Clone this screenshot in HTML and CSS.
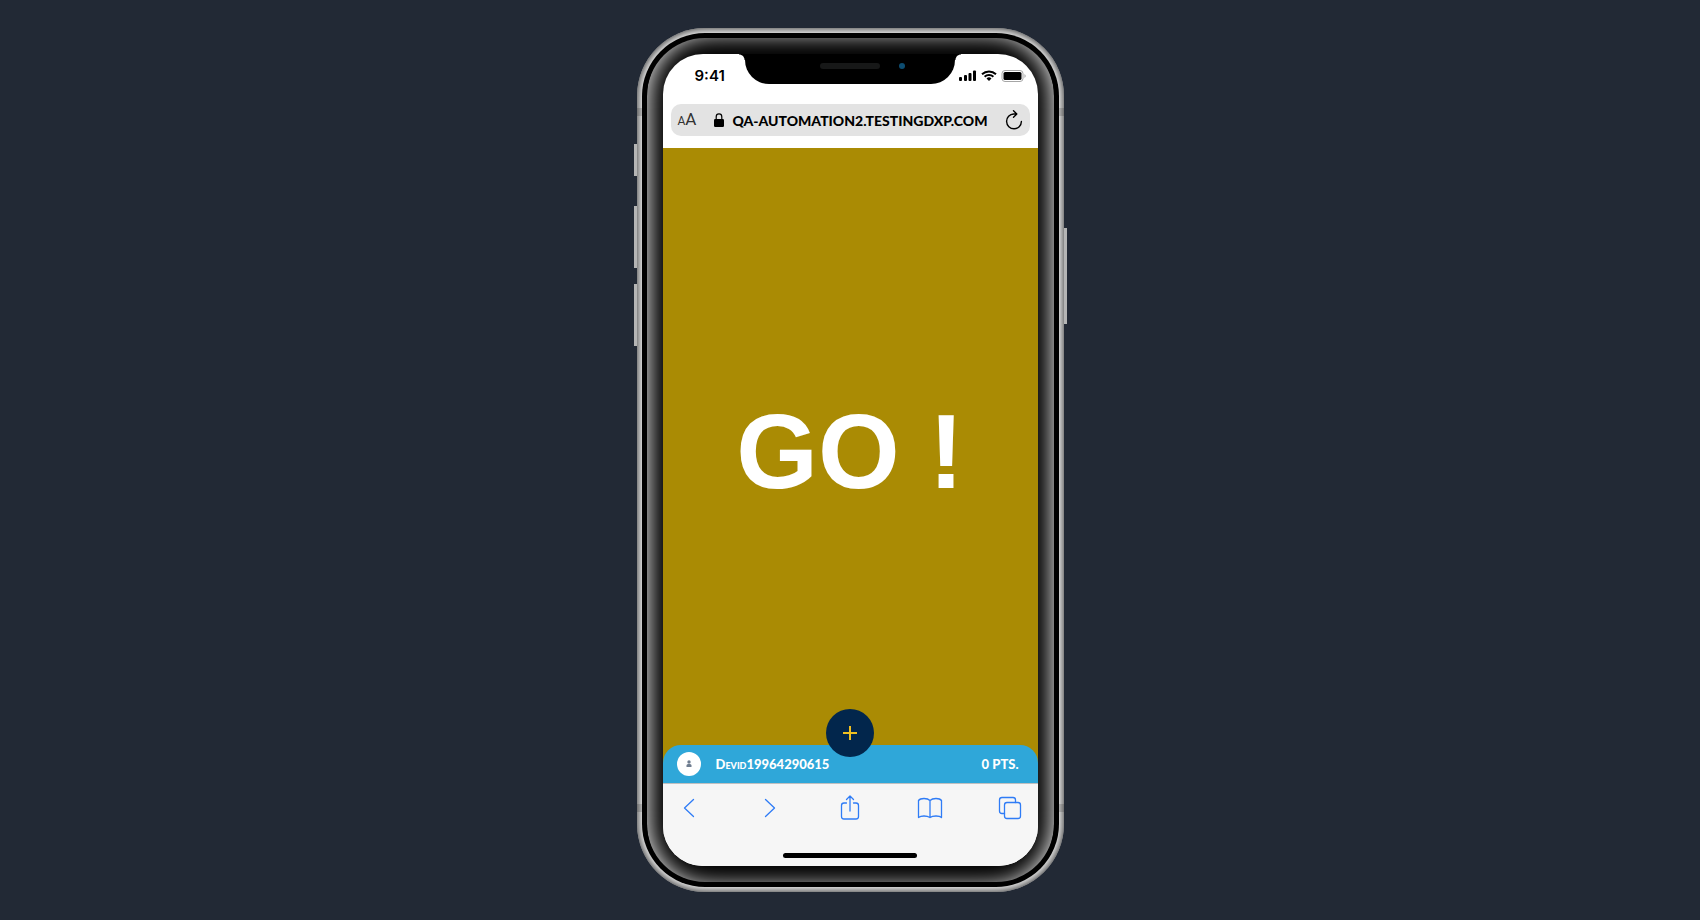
FILE: index.html
```html
<!DOCTYPE html>
<html lang="en">
<head>
<meta charset="utf-8">
<title>Mobile preview</title>
<link rel="stylesheet" href="styles.css">
</head>
<body>
<main class="stage">
  <div class="phone">
    <span class="band band-top"></span>
    <span class="band band-bottom"></span>
    <span class="key key-mute"></span>
    <span class="key key-up"></span>
    <span class="key key-down"></span>
    <span class="key key-power"></span>
    <span class="bezel"></span>
    <div class="screen">
      <div class="notch">
        <span class="speaker"></span>
        <span class="camera"></span>
      </div>
      <header class="status">
        <span class="time">9:41</span>
        <svg class="signals" width="66" height="12" viewBox="0 0 66 12" aria-hidden="true">
          <rect x="0" y="7" width="3" height="4" rx="1"/>
          <rect x="5" y="5" width="3" height="6" rx="1"/>
          <rect x="9.500" y="3" width="3" height="8" rx="1"/>
          <rect x="14" y="0.500" width="3" height="10.500" rx="1"/>
          <path d="M23 4.200a10.200 10.200 0 0 1 14 0M25.600 6.800a6.400 6.400 0 0 1 8.800 0" fill="none" stroke="#000" stroke-width="2"/>
          <path d="M30 11l-2.500-2.500a3.600 3.600 0 0 1 5 0z"/>
          <rect x="43" y="0.500" width="21" height="11" rx="3" fill="none" stroke="#a6a6a6"/>
          <rect x="44.500" y="2" width="18" height="8" rx="1.600"/>
          <path d="M65.500 4v4q1.200-.8 1.200-2t-1.200-2z" fill="#a6a6a6"/>
        </svg>
      </header>
      <div class="address">
        <button class="plain text-size" aria-label="Text size"><small>A</small>A</button>
        <div class="site">
          <svg width="10" height="14" viewBox="0 0 10 14" aria-hidden="true"><path d="M2.200 6.500V3.700a2.800 2.800 0 0 1 5.600 0v2.800" fill="none" stroke="#000" stroke-width="1.200"/><rect x="0" y="6" width="10" height="8" rx="1.300"/></svg>
          <span class="url">qa-automation2.testingdxp.com</span>
        </div>
        <button class="plain" aria-label="Reload">
          <svg width="18" height="20" viewBox="0 0 18 20" fill="none" stroke="#000" stroke-width="1.400" stroke-linecap="round" stroke-linejoin="round"><path d="M11.500 4H8.700A7.400 7.400 0 1 0 16.400 11.500M8.500 .8l3.300 3.200L8.500 7.300"/></svg>
        </button>
      </div>
      <section class="game">
        <h1 class="go">GO !</h1>
      </section>
      <div class="player">
        <span class="avatar"><svg width="6" height="8" viewBox="0 0 6 8" fill="#6f7d90" aria-hidden="true"><circle cx="3" cy="2" r="1.700"/><path d="M.5 7V5.500Q.5 4 2 4h2q1.500 0 1.500 1.500V7z"/></svg></span>
        <span class="name">Devid19964290615</span>
        <span class="points">0 pts.</span>
        <button class="add" aria-label="Add"><svg width="14" height="14" viewBox="0 0 14 14" stroke="#f0c020" stroke-width="2"><path d="M7 0v14M0 7h14"/></svg></button>
      </div>
      <nav class="tools">
        <button class="plain" aria-label="Back"><svg width="28" height="28" viewBox="0 0 28 28"><path d="M16.500 5.500L7.500 14l9 8.500"/></svg></button>
        <button class="plain" aria-label="Forward"><svg width="28" height="28" viewBox="0 0 28 28"><path d="M9.500 5.500l9 8.500-9 8.500"/></svg></button>
        <button class="plain" aria-label="Share"><svg width="28" height="28" viewBox="0 0 28 28"><path d="M10.500 9H8Q5.500 9 5.500 11.500v11Q5.500 25 8 25h12q2.500 0 2.500-2.500v-11Q22.500 9 20 9h-2.500M14 17V2M10.500 5.500L14 2l3.500 3.500"/></svg></button>
        <button class="plain" aria-label="Bookmarks"><svg width="28" height="28" viewBox="0 0 28 28"><path d="M14 6.500Q12 4.500 8 4.500T2.500 6.500V23.500Q4.500 22 8 22t6 1.500Q16 22 20 22t5.500 1.500V6.500Q24 4.500 20 4.500T14 6.500V23.500"/></svg></button>
        <button class="plain" aria-label="Tabs"><svg width="28" height="28" viewBox="0 0 28 28"><rect x="8.500" y="8.500" width="16" height="16" rx="2.500"/><path d="M8.500 19.500H6Q3.500 19.500 3.500 17V6Q3.500 3.500 6 3.500h11Q19.500 3.500 19.500 6v2.500"/></svg></button>
      </nav>
      <div class="home"><span class="home-bar"></span></div>
    </div>
  </div>
</main>
</body>
</html>
```
FILE: styles.css
```css
* { box-sizing: border-box; }
body {
  margin: 0;
  background: #222935;
  font-family: "Liberation Sans", Arial, sans-serif;
}
.stage {
  min-height: 100vh;
  display: flex;
  align-items: center;
  justify-content: center;
}
.phone {
  position: relative;
  padding: 26px;
  border-radius: 68px;
  background: #fdfdfd;
  box-shadow: inset 0 0 11px 0 #000;
}
.phone::before {
  content: "";
  position: absolute;
  inset: 5px;
  border-radius: 63px;
  background: #000;
}
.bezel {
  position: absolute;
  inset: 10px;
  border-radius: 58px;
  overflow: hidden;
}
.bezel::before {
  content: "";
  position: absolute;
  inset: -6px 0;
  border-radius: 64px;
  box-shadow: inset 0 0 25px 1px #fff;
}
.band {
  position: absolute;
  left: 0;
  width: 100%;
  height: 8px;
  background: rgba(0, 0, 0, 0.15);
}
.band-top { top: 80px; }
.band-bottom { bottom: 80px; }
.key {
  position: absolute;
  left: -3px;
  width: 3px;
  background: #b5b5b5;
}
.key-mute { top: 116px; height: 32px; }
.key-up { top: 178px; height: 62px; }
.key-down { top: 256px; height: 62px; }
.key-power { left: 100%; top: 200px; height: 96px; }
.screen {
  position: relative;
  display: flex;
  flex-direction: column;
  width: 375px;
  min-height: 812px;
  border-radius: 40px;
  overflow: hidden;
  background: #fff;
}
.notch {
  position: absolute;
  top: 0;
  left: 82px;
  right: 83px;
  height: 30px;
  border-radius: 0 0 24px 24px;
  background: #000;
}
.notch::before,
.notch::after {
  content: "";
  position: absolute;
  top: 0;
  width: 6px;
  height: 6px;
}
.notch::before {
  right: 100%;
  background: radial-gradient(circle at 0 100%, transparent 5px, #000 6px);
}
.notch::after {
  left: 100%;
  background: radial-gradient(circle at 100% 100%, transparent 5px, #000 6px);
}
.speaker {
  position: absolute;
  top: 9px;
  left: 75px;
  width: 60px;
  height: 6px;
  border-radius: 3px;
  background: #171818;
}
.camera {
  position: absolute;
  top: 9px;
  left: 154px;
  width: 6px;
  height: 6px;
  border-radius: 50%;
  background: #0d4d71;
}
.status {
  display: flex;
  align-items: center;
  justify-content: space-between;
  height: 44px;
  padding: 0 13px 0 32px;
}
.time {
  font: 600 15px/20px Inter, sans-serif;
}
.signals { overflow: visible; }
.plain {
  display: flex;
  align-items: center;
  justify-content: center;
  padding: 0;
  border: 0;
  background: none;
  color: inherit;
  font: inherit;
}
.address {
  display: flex;
  align-items: center;
  justify-content: space-between;
  height: 32px;
  margin: 6px 8px 12px;
  padding: 0 6px 0 7px;
  border-radius: 10px;
  background: #e3e3e3;
}
.text-size {
  align-items: baseline;
  color: #333;
  font: 400 17px/20px Roboto, sans-serif;
}
.text-size small { font-size: 12px; }
.site {
  display: flex;
  align-items: center;
  gap: 8px;
}
.url {
  padding-top: 2px;
  font: 900 14px/20px Lato, sans-serif;
  text-transform: uppercase;
}
.game {
  flex: 1;
  display: flex;
  align-items: center;
  justify-content: center;
  margin-bottom: -20px;
  padding-bottom: 10px;
  background: #aa8b04;
}
.go {
  margin: 0;
  color: #fff;
  font-size: 105px;
  line-height: 120px;
}
.player {
  position: relative;
  display: flex;
  align-items: center;
  height: 38px;
  padding: 0 19px 0 14px;
  border-radius: 18px 18px 0 0;
  background: #2fa7d9;
  color: #fff;
  font: 900 13px/20px Lato, sans-serif;
}
.avatar {
  display: flex;
  align-items: center;
  justify-content: center;
  width: 24px;
  height: 24px;
  margin-right: 15px;
  border-radius: 50%;
  background: #fff;
}
.name { font-variant: small-caps; }
.points {
  margin-left: auto;
  text-transform: uppercase;
}
.add {
  position: absolute;
  left: calc(50% - 24px);
  top: -36px;
  display: flex;
  align-items: center;
  justify-content: center;
  width: 48px;
  height: 48px;
  padding: 0;
  border: 0;
  border-radius: 50%;
  background: #02264c;
}
.tools {
  display: flex;
  justify-content: space-between;
  padding: 10px 14px 15px;
  border-top: 1px solid #c0c0c0;
  background: #f6f6f6;
}
.tools svg {
  fill: none;
  stroke: #2f7cf6;
  stroke-width: 1.3;
  stroke-linecap: round;
  stroke-linejoin: round;
}
.home {
  display: flex;
  justify-content: center;
  height: 29px;
  padding-top: 16px;
  background: #f6f6f6;
}
.home-bar {
  width: 134px;
  height: 5px;
  border-radius: 3px;
  background: #000;
}
```
